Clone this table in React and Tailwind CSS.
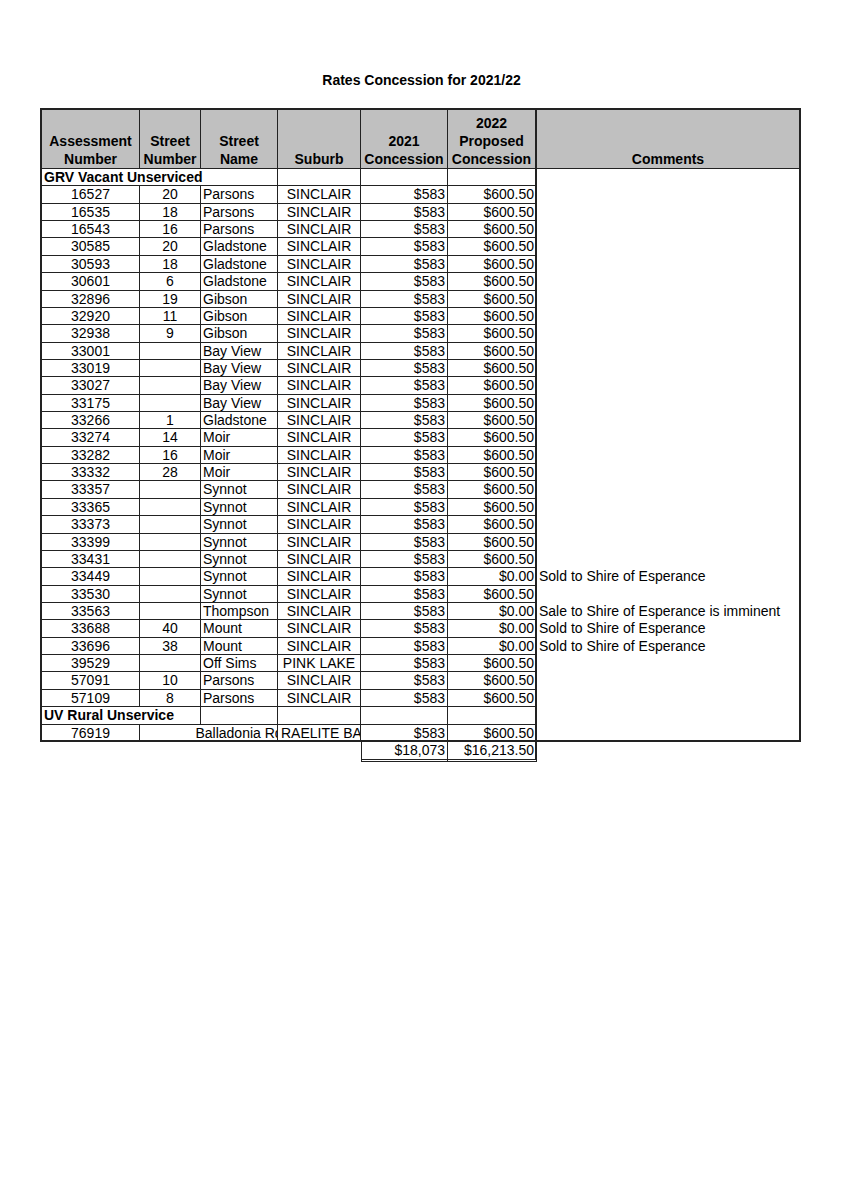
import React from 'react'

const rows = [
  ['16527', '20', 'Parsons'],
  ['16535', '18', 'Parsons'],
  ['16543', '16', 'Parsons'],
  ['30585', '20', 'Gladstone'],
  ['30593', '18', 'Gladstone'],
  ['30601', '6', 'Gladstone'],
  ['32896', '19', 'Gibson'],
  ['32920', '11', 'Gibson'],
  ['32938', '9', 'Gibson'],
  ['33001', '', 'Bay View'],
  ['33019', '', 'Bay View'],
  ['33027', '', 'Bay View'],
  ['33175', '', 'Bay View'],
  ['33266', '1', 'Gladstone'],
  ['33274', '14', 'Moir'],
  ['33282', '16', 'Moir'],
  ['33332', '28', 'Moir'],
  ['33357', '', 'Synnot'],
  ['33365', '', 'Synnot'],
  ['33373', '', 'Synnot'],
  ['33399', '', 'Synnot'],
  ['33431', '', 'Synnot'],
  ['33449', '', 'Synnot', 'SINCLAIR', '$0.00', 'Sold to Shire of Esperance'],
  ['33530', '', 'Synnot'],
  ['33563', '', 'Thompson', 'SINCLAIR', '$0.00', 'Sale to Shire of Esperance is imminent'],
  ['33688', '40', 'Mount', 'SINCLAIR', '$0.00', 'Sold to Shire of Esperance'],
  ['33696', '38', 'Mount', 'SINCLAIR', '$0.00', 'Sold to Shire of Esperance'],
  ['39529', '', 'Off Sims', 'PINK LAKE'],
  ['57091', '10', 'Parsons'],
  ['57109', '8', 'Parsons'],
]

const line = 'border-[#222]'
const row = 'flex h-[17.36px] leading-[17px]'

const App = () => {
  return (
    <div className="w-[843px] min-h-[1193px] bg-white text-black text-[14px] font-['Liberation_Sans',Arial,sans-serif]">
      <div className="pt-[72px] mb-[20px] text-center font-bold leading-[16px]">
        Rates Concession for 2021/22
      </div>

      <div className="ml-[40px] w-[761px]">
        {/* Header */}
        <div className="flex h-[61px] bg-[#c0c0c0] font-bold text-center leading-[18px]">
          <div className={`w-[100px] border-l-2 border-t-2 border-r border-b ${line} flex flex-col justify-end`}>
            <span>Assessment</span>
            <span>Number</span>
          </div>
          <div className={`w-[61px] border-t-2 border-r border-b ${line} flex flex-col justify-end`}>
            <span>Street</span>
            <span>Number</span>
          </div>
          <div className={`w-[77px] border-t-2 border-r border-b ${line} flex flex-col justify-end`}>
            <span>Street</span>
            <span>Name</span>
          </div>
          <div className={`w-[83px] border-t-2 border-r border-b ${line} flex flex-col justify-end`}>
            <span>Suburb</span>
          </div>
          <div className={`w-[87px] border-t-2 border-r border-b ${line} flex flex-col justify-end`}>
            <span>2021</span>
            <span>Concession</span>
          </div>
          <div className={`w-[89px] border-t-2 border-r-2 border-b ${line} flex flex-col justify-end`}>
            <span>2022</span>
            <span>Proposed</span>
            <span>Concession</span>
          </div>
          <div className={`w-[264px] border-t-2 border-r-2 border-b ${line} flex flex-col justify-end`}>
            <span>Comments</span>
          </div>
        </div>

        {/* GRV group */}
        <div className={row}>
          <div className={`w-[238px] border-l-2 border-r border-b ${line} pl-[2px] font-bold whitespace-nowrap`}>
            GRV Vacant Unserviced
          </div>
          <div className={`w-[83px] border-r border-b ${line}`}></div>
          <div className={`w-[87px] border-r border-b ${line}`}></div>
          <div className={`w-[89px] border-r-2 border-b ${line}`}></div>
          <div className={`w-[264px] border-r-2 ${line}`}></div>
        </div>

        {rows.map(([num, st, name, suburb = 'SINCLAIR', prop = '$600.50', comment = '']) => (
          <div key={num} className={row}>
            <div className={`w-[100px] border-l-2 border-r border-b ${line} text-center`}>{num}</div>
            <div className={`w-[61px] border-r border-b ${line} text-center`}>{st}</div>
            <div className={`w-[77px] border-r border-b ${line} pl-[2px] whitespace-nowrap`}>{name}</div>
            <div className={`w-[83px] border-r border-b ${line} text-center whitespace-nowrap`}>{suburb}</div>
            <div className={`w-[87px] border-r border-b ${line} text-right pr-[2px]`}>$583</div>
            <div className={`w-[89px] border-r-2 border-b ${line} text-right pr-[1px]`}>{prop}</div>
            <div className={`w-[264px] border-r-2 ${line} pl-[2px] whitespace-nowrap`}>{comment}</div>
          </div>
        ))}

        {/* UV group */}
        <div className={row}>
          <div className={`w-[161px] border-l-2 border-r border-b ${line} pl-[2px] font-bold whitespace-nowrap`}>
            UV Rural Unservice
          </div>
          <div className={`w-[77px] border-r border-b ${line}`}></div>
          <div className={`w-[83px] border-r border-b ${line}`}></div>
          <div className={`w-[87px] border-r border-b ${line}`}></div>
          <div className={`w-[89px] border-r-2 border-b ${line}`}></div>
          <div className={`w-[264px] border-r-2 ${line}`}></div>
        </div>

        <div className="flex h-[17.36px] leading-[16px]">
          <div className={`w-[100px] border-l-2 border-r border-b-2 ${line} text-center`}>76919</div>
          <div className={`w-[138px] border-r border-b-2 ${line} flex overflow-hidden`}>
            <div className="w-[61px] shrink-0"></div>
            <div className="w-[76px] shrink-0 flex justify-center whitespace-nowrap">Balladonia Rd</div>
          </div>
          <div className={`w-[83px] border-r border-b-2 ${line} pl-[3px] overflow-hidden whitespace-nowrap`}>RAELITE BAY</div>
          <div className={`w-[87px] border-r border-b-2 ${line} text-right pr-[2px]`}>$583</div>
          <div className={`w-[89px] border-r-2 border-b-2 ${line} text-right pr-[1px]`}>$600.50</div>
          <div className={`w-[264px] border-r-2 border-b-2 ${line}`}></div>
        </div>

        {/* Totals */}
        <div className="flex h-[20px] leading-[16px]">
          <div className="w-[321px]"></div>
          <div className={`w-[87px] border-l border-r border-b-[3px] border-double ${line} text-right pr-[2px]`}>$18,073</div>
          <div className={`w-[89px] border-r-2 border-b-[3px] border-double ${line} text-right pr-[1px]`}>$16,213.50</div>
        </div>
      </div>
    </div>
  )
}

export default App
